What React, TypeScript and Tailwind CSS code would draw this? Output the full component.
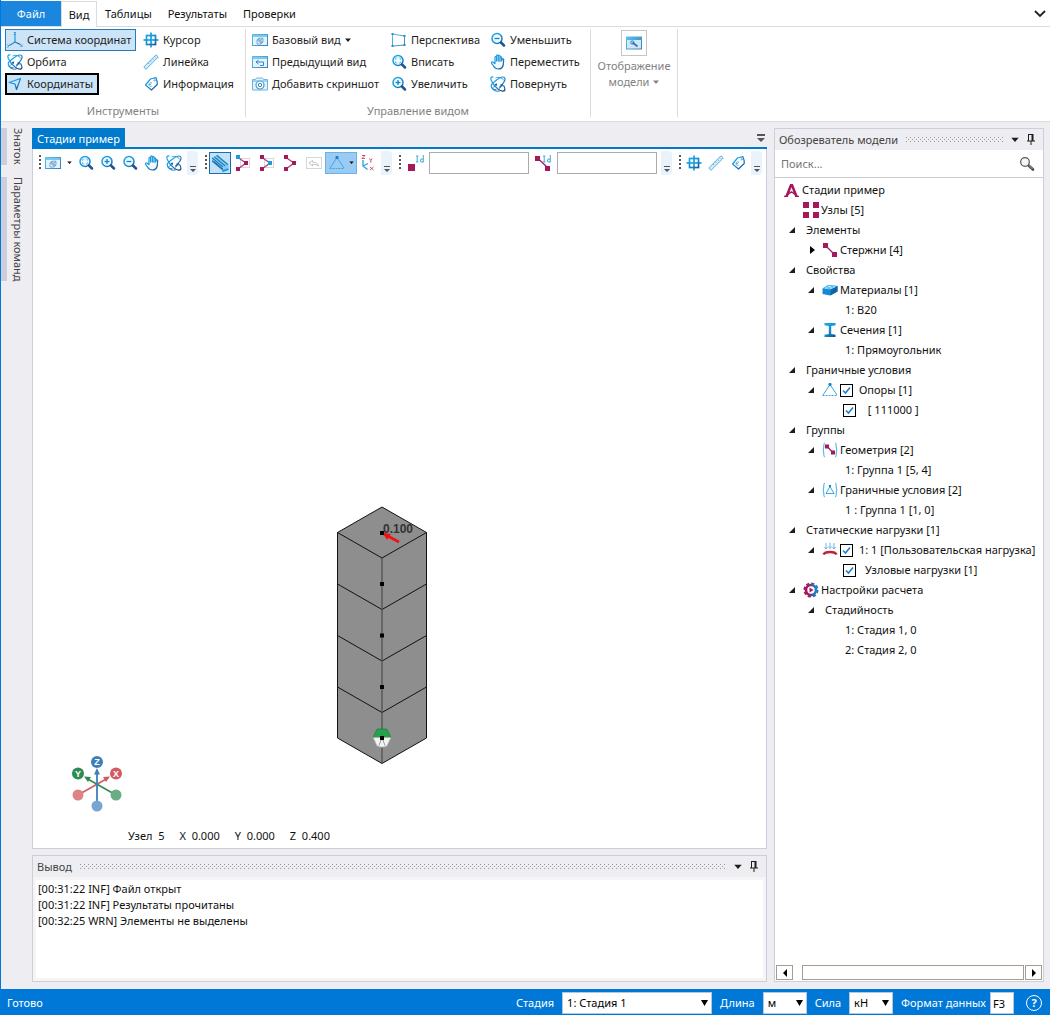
import React from 'react';
import clsx from 'clsx';

type IconProps = { className?: string };

const Svg: React.FC<{ className?: string; box?: string; children: React.ReactNode }> = ({ className, box = '0 0 16 16', children }) => (
    <svg viewBox={box} className={clsx('shrink-0', className ?? 'size-4')} fill="none" aria-hidden="true">
        {children}
    </svg>
);

// Gradients shared by all icons
const IconGradients = () => (
    <svg className="absolute size-0" aria-hidden="true">
        <defs>
            <linearGradient id="blue" x1="0" y1="0" x2="16" y2="16" gradientUnits="userSpaceOnUse">
                <stop offset="0.2" stopColor="#1ba8ea" />
                <stop offset="0.55" stopColor="#1488cf" />
                <stop offset="0.9" stopColor="#22427c" />
            </linearGradient>
            <linearGradient id="sky" x1="0" y1="0" x2="16" y2="16" gradientUnits="userSpaceOnUse">
                <stop offset="0.1" stopColor="#58c0ee" />
                <stop offset="1" stopColor="#3a78ae" />
            </linearGradient>
            <linearGradient id="gear" x1="1" y1="8" x2="15" y2="8" gradientUnits="userSpaceOnUse">
                <stop offset="0.3" stopColor="#a5185b" />
                <stop offset="0.8" stopColor="#1e7fc4" />
            </linearGradient>
        </defs>
    </svg>
);

const AxesIcon = () => (
    <Svg>
        <path d="M8 3v7L2.500 13.500M8 10l5.500 2.500" stroke="url(#blue)" strokeWidth="1.100" />
        <path d="M6.800 0.500h2.200L6.800 2.500h2.200M0.500 12.500l1 1.500 1-1.500M1.500 14l-.8 1.800M13.500 12.500l2 2.500M15.500 12.500l-2 2.500" stroke="#2a86c4" strokeWidth="0.800" />
    </Svg>
);

const OrbitIcon = ({ className }: IconProps) => (
    <Svg className={className}>
        <path d="M3.500 1C1 .5.3 2 1.300 4.500c1.200 3 4 6.500 7 8.800 3 2.200 6 2.500 6.500 .7.400-1.500-.3-3-1.300-4.800" stroke="url(#blue)" strokeWidth="1.200" />
        <path d="M6.500 13.800C3.500 14 1.200 12 1.200 9.800 1.200 7.500 3.500 6.500 6 4.500c2.500-2 4.800-3.700 7-3.500 2.200.2 2.600 2.200 1.300 4.500-1.300 2.200-3 4.300-5 6" stroke="url(#blue)" strokeWidth="1.200" />
        <path d="M5.500 2c3-1.500 6.500-.3 8.500 2.500M1.800 12c1.500 3 5.500 4 8.500 2.500" stroke="url(#blue)" strokeWidth="0.900" />
        <path d="M4.500 8l2.700-.5-.7 2.700zM13 8l-3 .8 2.300 2z" fill="#16539a" />
        <path d="M5.500 9.200l-2.500 2.500M9.500 12.500l2-2.500" stroke="#1a6fb5" strokeWidth="0.900" />
    </Svg>
);

const PlaneIcon = () => (
    <Svg>
        <path d="M2 6.500L13.500 2.500 9.500 13.500 8 8z" stroke="url(#blue)" strokeWidth="1.200" strokeLinejoin="round" />
    </Svg>
);

const CursorIcon = () => (
    <Svg>
        <path d="M8 .5v15" stroke="#1a9fe0" strokeWidth="1.700" />
        <path d="M.5 8h15" stroke="#1a9fe0" strokeWidth="1.700" />
        <rect x="3.500" y="3.500" width="9" height="9" stroke="url(#blue)" strokeWidth="1.700" />
    </Svg>
);

const RulerIcon = () => (
    <Svg>
        <path d="M13 .8L15.300 3 3 15.300.8 13z" fill="#d5edf9" stroke="#5fb0dc" />
        <path d="M5 8.800l1.200 1.200M7.200 6.600l1.200 1.200M9.400 4.400l1.200 1.200M11.500 2.300l1.200 1.200" stroke="#5fb0dc" />
    </Svg>
);

const TagIcon = () => (
    <Svg>
        <path d="M7.500 3l5.500-1.300L14.200 6v2.500L8.500 14 2.500 9z" stroke="url(#blue)" strokeWidth="1.200" strokeLinejoin="round" />
        <circle cx="11.800" cy="4.300" r=".7" stroke="#1a6fb5" strokeWidth="0.600" />
        <path d="M9 7c-1.700-.6-3 .4-3 1.600s1.200 2.200 2.600 1.700M6 8.600h2" stroke="url(#sky)" strokeWidth="0.900" />
    </Svg>
);

const WindowFrame = ({ children }: { children?: React.ReactNode }) => (
    <Svg>
        <rect x=".5" y="2.500" width="15" height="11" fill="#e3f2fb" stroke="url(#sky)" />
        <path d="M1 3h14v2H1z" fill="#7dc8ef" />
        {children}
    </Svg>
);

const BaseViewIcon = () => (
    <WindowFrame>
        <path d="M5 8h4v4H5zM5 8l2-1.800h4V10l-2 2M9 8l2-1.800M7 6.200V10h4" stroke="#4a93c8" strokeWidth="0.700" />
    </WindowFrame>
);

const PreviousViewIcon = () => (
    <WindowFrame>
        <path d="M4 8h7.500v3.500H8M6.500 6L4 8l2.500 2" stroke="#3a86bd" />
    </WindowFrame>
);

const CameraIcon = () => (
    <Svg>
        <path d="M.5 3.500h3l1-1.500h6l1 1.500h4v10.500H.5z" fill="#e3f2fb" stroke="#69b7e0" />
        <path d="M1 4h14v2H1z" fill="#9bd3f1" />
        <circle cx="8" cy="9" r="4" fill="#fff" stroke="url(#sky)" strokeWidth="1.200" />
        <circle cx="8" cy="9" r="1.700" stroke="#3a86bd" />
    </Svg>
);

const PerspectiveIcon = () => (
    <Svg>
        <path d="M1.500 2l12 2v9l-12 1z" stroke="url(#sky)" />
        <path d="M.5 1h2v2h-2zM12.500 3h2v2h-2zM12.500 12h2v2h-2zM.5 13h2v2h-2z" fill="#1c8fd0" />
    </Svg>
);

const ZoomIcon = ({ kind }: { kind: 'in' | 'out' | 'fit' }) => (
    <Svg>
        <circle cx="7" cy="6.500" r="5" stroke="url(#blue)" strokeWidth="1.500" fill="#f2faff" />
        <path d="M11 10.500l3 3" stroke="#24528f" strokeWidth="2.500" strokeLinecap="round" />
        {kind !== 'fit' && <path d="M4.500 6.500h5" stroke="#1580c5" strokeWidth="1.300" />}
        {kind === 'in' && <path d="M7 4v5" stroke="#1580c5" strokeWidth="1.300" />}
        {kind === 'fit' && <path d="M4.500 5.800V4h1.800M7.800 4h1.800v1.800M9.600 7.300V9H7.800M6.300 9H4.500V7.300" stroke="#6cc4ee" />}
    </Svg>
);

const HandIcon = () => (
    <Svg>
        <path
            d="M5 9.500V3.300c0-1.300 1.600-1.300 1.600 0V7 1.900c0-1.300 1.700-1.300 1.700 0V7 2.300c0-1.300 1.700-1.300 1.700 0v5-3.600c0-1.200 1.700-1.200 1.700 0V7l.3-1.500c.3-1.200 1.800-.8 1.700.3L13.200 11c-.6 2.600-2.200 4-4.700 4-2.600 0-4-1.200-5-3L1.600 9.300c-.6-1.200.7-2 1.600-1.100z"
            fill="#eef8fe"
            stroke="url(#blue)"
            strokeWidth="1.200"
            strokeLinejoin="round"
        />
    </Svg>
);

const DisplayIcon = () => (
    <Svg>
        <path d="M0 1.500h16v13H0z" fill="url(#sky)" />
        <path d="M1 5h14v8.500H1z" fill="#cfe8f7" />
        <path d="M6.500 7.500l5 4" stroke="#2a7bbd" strokeWidth="1.800" />
        <circle cx="6.300" cy="7.500" r="1.600" stroke="#2a7bbd" />
    </Svg>
);

const BeamIcon = () => (
    <Svg className="size-[18px]">
        <path d="M1 3.500L6 .5l9.500 8.500v4.500L10.500 15 1 7z" fill="#7ccbf0" />
        <path d="M1 3.500l9.500 8M3 2.500l9.500 8M5 1.200l10 8.300M1 6l9.500 8M2.500 6.500l8 7" stroke="#1c6fae" strokeWidth="0.900" />
        <path d="M10 15.500l5.500-2" stroke="#1b9be0" strokeWidth="1.600" />
    </Svg>
);

// Angle of two bars with three nodes, each tool highlights other parts
const AngleIcon = ({ ends, middle, box = true }: { ends: string; middle: string; box?: boolean }) => (
    <Svg>
        {box && <rect x="5.500" y="3.500" width="9" height="9" stroke="#c9a7b8" strokeDasharray="1 1" />}
        <path d="M3 2.500L11 8 3 14" stroke="#a8406f" strokeWidth="1.300" />
        <path d="M1 0h4v4H1z" fill={ends} />
        <path d="M9 6h4v4H9z" fill={middle} />
        <path d="M1 12h4v4H1z" fill="#a5185b" />
    </Svg>
);

const UndoFrameIcon = () => (
    <Svg>
        <rect x=".5" y="2.500" width="15" height="11" stroke="#d6d6d6" />
        <path d="M3 8l3.500-2.500v1.500c3 0 5 1 6 4-2-1.500-3.500-1.700-6-1.700V11z" stroke="#c4c4c4" />
    </Svg>
);

const SupportIcon = ({ className }: IconProps) => (
    <Svg className={className}>
        <path d="M8 2.500L1 13M8 2.500L15 13" stroke="#38a9e2" />
        <path d="M.5 13.500h15" stroke="#38a9e2" strokeDasharray="2 1" />
        <rect x="6.500" y="1" width="3" height="3" rx="1" fill="#1580c5" />
    </Svg>
);

const LocalAxesIcon = () => (
    <Svg>
        <path d="M3 5v6l4.500 3.500M3 11l5-2.500" stroke="#2b9fdd" strokeWidth="1.300" />
        <path d="M2 .5h3l-3 3h3M9.500 3.500l1.300 2 1.300-2M10.800 5.500v2.200M10 12l3.500 3M13.500 12L10 15" stroke="#c43f76" strokeWidth="0.900" />
    </Svg>
);

const IdIcon = ({ bar }: { bar?: boolean }) => (
    <Svg>
        {bar ? (
            <>
                <path d="M3 3.500l10 9.500" stroke="#a5185b" strokeWidth="1.200" />
                <path d="M0 1h5v5H0zM10 11h5v5h-5z" fill="#a5185b" />
            </>
        ) : (
            <path d="M0 9h7v7H0z" fill="#a5185b" />
        )}
        <path d="M8 1h2.500M9.200 1v6M8 7h2.500M15.300 0v7.500M15.300 4.500c-1-1-2.800-.5-2.800 1s1.800 2 2.800.8" stroke="#4bb0e0" strokeWidth="1.100" />
    </Svg>
);

const LogoIcon = () => (
    <Svg className="mr-px size-[15px]">
        <path d="M1 15L6.500 1h3L15 15h-3L8 4.500 4 15z" fill="#a5185b" />
        <path d="M3.500 12.500l4.500-3 4.500 3" stroke="#a5185b" strokeWidth="1.600" />
        <path d="M0 13.500h4V15H0zM12 13.500h4V15h-4z" fill="#a5185b" />
    </Svg>
);

const NodesIcon = () => (
    <Svg>
        <path d="M0 0h6v6H0zM10 0h6v6h-6zM0 10h6v6H0zM10 10h6v6h-6z" fill="#a5185b" />
    </Svg>
);

const BarIcon = () => (
    <Svg>
        <path d="M3 3l10 10" stroke="#a5185b" strokeWidth="1.200" />
        <path d="M1 1h5v5H1zM10 10h5v5h-5z" fill="#a5185b" />
    </Svg>
);

const MaterialIcon = () => (
    <Svg>
        <path d="M.5 6.500L6 3l9.500 1v5.500L8 13.500.5 12z" fill="#1789d2" />
        <path d="M.5 6.500L6 3l9.500 1L9 7.500z" fill="#5cc0f0" />
        <path d="M9 7.500l6.500-3.500v5.500L8.500 13.500z" fill="#1260a5" />
        <path d="M3 6h3M6 4.500h3M8 6h2.500M11 5h2" stroke="#bfe6fa" />
    </Svg>
);

const SectionIcon = () => (
    <Svg>
        <path d="M2.500 1h11v2.200L9.200 4v8l4.300.8V15h-11v-2.200l4.300-.8V4l-4.300-.8z" fill="url(#blue)" />
    </Svg>
);

const Braces = ({ children }: { children: React.ReactNode }) => (
    <Svg>
        <path d="M3 1C1 1 2.500 6 1 8c1.500 2 0 7 2 7M13 1c2 0 .5 5 2 7-1.500 2 0 7-2 7" stroke="#35a8e0" />
        {children}
    </Svg>
);

const GeometryGroupIcon = () => (
    <Braces>
        <path d="M5 4l6 7" stroke="#a5185b" strokeWidth="1.200" />
        <path d="M3 2.500h4v4H3zM9 8.500h4v4H9z" fill="#a5185b" />
    </Braces>
);

const BoundaryGroupIcon = () => (
    <Braces>
        <path d="M8 4.500L4 11.500h8z" stroke="#38a9e2" />
        <path d="M7 3h2v2H7z" fill="#1580c5" />
    </Braces>
);

const LoadIcon = () => (
    <Svg>
        <path d="M4 1v6M8 .5v6M12 1v6M2.500 5L4 7l1.500-2M6.500 4.500l1.500 2 1.500-2M10.500 5L12 7l1.500-2" stroke="#6db9e2" />
        <path d="M1.500 12.500C3 9 13 9 14.500 12.500" stroke="#c0203a" strokeWidth="2.500" />
    </Svg>
);

const GearIcon = () => (
    <Svg>
        <circle cx="8" cy="8" r="6.700" stroke="url(#gear)" strokeWidth="1.800" strokeDasharray="3.260 2" />
        <circle cx="8" cy="8" r="5" stroke="url(#gear)" strokeWidth="2.600" />
        <path d="M6.500 5.500l4 2.500-4 2.500z" fill="#a5185b" />
    </Svg>
);

const Caret = ({ className }: IconProps) => (
    <Svg box="0 0 6 4" className={className ?? 'h-1 w-1.5'}>
        <path d="M0 .5h6L3 4z" fill="currentColor" />
    </Svg>
);

const PinIcon = () => (
    <Svg box="0 0 8 11" className="h-[11px] w-2">
        <path d="M2 .5h4M1.500 0v7M5.500 0v7M0 7h8M4 7v4" stroke="#1e1e1e" />
        <path d="M4.500 0h2v7h-2z" fill="#1e1e1e" />
    </Svg>
);

const RibbonButton: React.FC<{ icon: React.ReactNode; label: string; active?: boolean; focused?: boolean; dropdown?: boolean }> = ({
    icon,
    label,
    active,
    focused,
    dropdown,
}) => (
    <button
        className={clsx(
            'flex h-[22px] items-center gap-1 whitespace-nowrap',
            focused ? 'border-2 border-black pr-1' : 'border px-px pr-1',
            active && !focused && 'border-[#2a7ab8]',
            !active && 'border-transparent',
            active && 'bg-[#cce4f7]',
        )}
    >
        {icon}
        {label}
        {dropdown && <Caret />}
    </button>
);

const RibbonGroup: React.FC<{ title: string; children: React.ReactNode }> = ({ title, children }) => (
    <section className="flex flex-col border-r border-[#dcdcdc] px-1">
        <div className="flex">{children}</div>
        <h2 className="mt-2 text-center text-[#828282]">{title}</h2>
    </section>
);

const Ribbon = () => (
    <header className="border-b border-[#dcdcdc] bg-white">
        <nav className="flex h-[27px] items-stretch border-b border-[#dcdcdc] pt-px">
            <button className="w-[60px] bg-[#1a86dd] text-white">Файл</button>
            <button className="-mb-px w-9 border border-b-0 border-[#dcdcdc] bg-white">Вид</button>
            <button className="px-2">Таблицы</button>
            <button className="px-2">Результаты</button>
            <button className="px-2">Проверки</button>
            <button className="ml-auto px-1" aria-label="Свернуть ленту">
                <Svg box="0 0 12 8" className="h-2 w-3">
                    <path d="M1 1l5 5 5-5" stroke="#222" strokeWidth="1.800" />
                </Svg>
            </button>
        </nav>
        <div className="flex h-[94px] pt-0.5 pb-1 text-[#1e1e1e]">
            <RibbonGroup title="Инструменты">
                <div className="flex w-[136px] flex-col items-start">
                    <RibbonButton icon={<AxesIcon />} label="Система координат" active />
                    <RibbonButton icon={<OrbitIcon />} label="Орбита" />
                    <RibbonButton icon={<PlaneIcon />} label="Координаты" active focused />
                </div>
                <div className="flex w-[100px] flex-col items-start">
                    <RibbonButton icon={<CursorIcon />} label="Курсор" />
                    <RibbonButton icon={<RulerIcon />} label="Линейка" />
                    <RibbonButton icon={<TagIcon />} label="Информация" />
                </div>
            </RibbonGroup>
            <RibbonGroup title="Управление видом">
                <div className="flex w-[139px] flex-col items-start">
                    <RibbonButton icon={<BaseViewIcon />} label="Базовый вид" dropdown />
                    <RibbonButton icon={<PreviousViewIcon />} label="Предыдущий вид" />
                    <RibbonButton icon={<CameraIcon />} label="Добавить скриншот" />
                </div>
                <div className="flex w-[99px] flex-col items-start">
                    <RibbonButton icon={<PerspectiveIcon />} label="Перспектива" />
                    <RibbonButton icon={<ZoomIcon kind="fit" />} label="Вписать" />
                    <RibbonButton icon={<ZoomIcon kind="in" />} label="Увеличить" />
                </div>
                <div className="flex w-[98px] flex-col items-start">
                    <RibbonButton icon={<ZoomIcon kind="out" />} label="Уменьшить" />
                    <RibbonButton icon={<HandIcon />} label="Переместить" />
                    <RibbonButton icon={<OrbitIcon />} label="Повернуть" />
                </div>
            </RibbonGroup>
            <section className="flex w-[87px] flex-col items-center border-r border-[#dcdcdc] pt-px text-[#828282]">
                <button className="flex flex-col items-center">
                    <span className="mb-0.5 flex size-[26px] items-center justify-center border border-[#c6c6c6]">
                        <DisplayIcon />
                    </span>
                    <span>Отображение</span>
                    <span className="flex items-center gap-1">
                        модели <Caret />
                    </span>
                </button>
            </section>
        </div>
    </header>
);

const ToolGrip = () => (
    <Svg box="0 0 5 15" className="h-[15px] w-[5px]">
        <path d="M2 0v15" stroke="#555" strokeWidth="2" strokeDasharray="2 2" />
    </Svg>
);

const ToolOverflow = () => (
    <button className="ml-0.5 flex h-6 w-[11px] items-end justify-center rounded-r bg-[#eaf3fc] pb-[3px] text-[#555]" aria-label="Ещё">
        <Svg box="0 0 6 6" className="size-1.5">
            <path d="M0 0h6v1H0zM0 3h6L3 6z" fill="currentColor" />
        </Svg>
    </button>
);

const ToolButton: React.FC<{ label: string; className?: string; children: React.ReactNode }> = ({ label, className, children }) => (
    <button className={clsx('flex h-[22px] items-center justify-center', className ?? 'w-[22px]')} aria-label={label}>
        {children}
    </button>
);

const Toolbar = () => (
    <div className="flex h-[25px] items-center gap-1.5 pl-[5px]">
        <div className="flex items-center">
            <ToolGrip />
            <ToolButton label="Базовый вид" className="w-5"><BaseViewIcon /></ToolButton>
            <ToolButton label="Выбор вида" className="w-3"><Caret className="h-[3px] w-[5px]" /></ToolButton>
            <ToolButton label="Вписать"><ZoomIcon kind="fit" /></ToolButton>
            <ToolButton label="Увеличить"><ZoomIcon kind="in" /></ToolButton>
            <ToolButton label="Уменьшить"><ZoomIcon kind="out" /></ToolButton>
            <ToolButton label="Переместить"><HandIcon /></ToolButton>
            <ToolButton label="Повернуть"><OrbitIcon /></ToolButton>
            <ToolOverflow />
        </div>
        <div className="flex items-center">
            <ToolGrip />
            <ToolButton label="Сечения" className="w-[22px] border border-[#1c6ea4] bg-[#c4e1f7]"><BeamIcon /></ToolButton>
            <ToolButton label="Выбор узлов" className="w-6"><AngleIcon ends="#1c9be0" middle="#a5185b" /></ToolButton>
            <ToolButton label="Выбор стержней" className="w-6"><AngleIcon ends="#a5185b" middle="#1c9be0" /></ToolButton>
            <ToolButton label="Выбор всех" className="w-6"><AngleIcon ends="#a5185b" middle="#a5185b" box={false} /></ToolButton>
            <ToolButton label="Отменить"><UndoFrameIcon /></ToolButton>
            <ToolButton label="Опоры" className="w-8 gap-1 border border-[#6fb0e6] bg-[#9acbf2]">
                <SupportIcon />
                <Caret className="h-[3px] w-[5px]" />
            </ToolButton>
            <ToolButton label="Локальные оси"><LocalAxesIcon /></ToolButton>
            <ToolOverflow />
        </div>
        <div className="flex items-center">
            <ToolGrip />
            <label htmlFor="node-id" className="flex w-[26px] justify-center" aria-label="Номер узла"><IdIcon /></label>
            <input id="node-id" className="h-[22px] w-[100px] border border-[#ababab] bg-white px-1" />
            <label htmlFor="bar-id" className="flex w-7 justify-center" aria-label="Номер стержня"><IdIcon bar /></label>
            <input id="bar-id" className="mr-0.5 h-[22px] w-[100px] border border-[#ababab] bg-white px-1" />
            <ToolOverflow />
        </div>
        <div className="flex items-center">
            <ToolGrip />
            <ToolButton label="Курсор"><CursorIcon /></ToolButton>
            <ToolButton label="Линейка"><RulerIcon /></ToolButton>
            <ToolButton label="Информация"><TagIcon /></ToolButton>
            <ToolOverflow />
        </div>
    </div>
);

// Column of four stacked bars, fixed at the bottom and loaded at the top
const ColumnModel = () => (
    <svg viewBox="0 0 92 260" className="absolute top-[331px] left-[303px] h-[260px] w-[92px]" fill="none">
        <path d="M46 1l44.500 25.500v205.500L46 257.500 1.500 232V26.500z" fill="#8e8e8e" stroke="#111" />
        <path d="M1.500 26.500L46 52l44.500-25.500M1.500 78L46 103.500 90.500 78M1.500 129.500L46 155l44.500-25.500M1.500 181L46 206.500 90.500 181" stroke="#111" />
        <path d="M46 52v205" stroke="#4c4c4c" strokeWidth="1.200" />
        <path d="M41 223h10l4 8.500H37z" fill="#25a24c" stroke="#187a36" strokeWidth="0.600" />
        <path d="M37 231.500h18l-4 8.500c-3 1.500-7 1.500-10 0z" fill="#f4f4f4" stroke="#a9a9a9" strokeWidth="0.800" />
        <path d="M46 231.500l-3 8M46 231.500l3 8" stroke="#999" />
        <path d="M48 28l15 8" stroke="#f01010" strokeWidth="2.600" />
        <path d="M47 27l8 1-4 6z" fill="#f01010" />
        <path d="M44 25h4v4h-4zM44 76h4v4h-4zM44 127.500h4v4h-4zM44 179h4v4h-4zM44 230h4v4h-4z" fill="#000" />
        <text x="47" y="27" fontFamily="Liberation Sans, sans-serif" fontSize="12" fontWeight="bold" fill="#333">0.100</text>
    </svg>
);

const AxisGizmo = () => (
    <svg viewBox="0 0 54 58" className="absolute bottom-[35px] left-[37px] h-[58px] w-[54px]" fill="none">
        <path d="M8 40l30-17" stroke="#d25b63" strokeWidth="1.600" />
        <path d="M46 40L16 23" stroke="#2c8c52" strokeWidth="1.600" />
        <path d="M27 50V18" stroke="#3f7fb8" strokeWidth="1.800" />
        <path d="M27 13l3 6.500h-6z" fill="#3f7fb8" />
        <path d="M14 21.500l7 .5-3 5z" fill="#2c8c52" />
        <path d="M40 21.500l-7 .5 3 5z" fill="#d25b63" />
        <circle cx="8" cy="40" r="5.500" fill="#de8286" />
        <circle cx="46" cy="40" r="5.500" fill="#68ad86" />
        <circle cx="27" cy="51" r="5.500" fill="#76a5cf" />
        <circle cx="27" cy="7" r="6" fill="#3f7fb8" />
        <circle cx="8" cy="18.500" r="6" fill="#2c8c52" />
        <circle cx="46" cy="18.500" r="6" fill="#d25b63" />
        <g fill="#fff" fontFamily="Liberation Sans, sans-serif" fontSize="9" fontWeight="bold" textAnchor="middle">
            <text x="27" y="10">Z</text>
            <text x="8" y="21.500">Y</text>
            <text x="46" y="21.500">X</text>
        </g>
    </svg>
);

const Viewport = () => (
    <section className="flex min-h-0 flex-1 flex-col">
        <div className="flex h-[21px] items-center border-b-2 border-[#007acc]">
            <h1 className="flex h-full items-center bg-[#007acc] px-[5px] pt-0.5 text-white">Стадии пример</h1>
            <button className="ml-auto pr-0.5 text-[#555]" aria-label="Список документов">
                <Svg box="0 0 8 8" className="size-2">
                    <path d="M0 0h8v2H0zM0 4h8L4 8z" fill="currentColor" />
                </Svg>
            </button>
        </div>
        <div className="flex flex-1 flex-col border border-t-0 border-[#ccceDB] bg-white pt-px">
            <Toolbar />
            <div className="relative flex-1 overflow-hidden">
                <ColumnModel />
                <AxisGizmo />
                <div className="absolute bottom-1 left-[95px] flex gap-[15px]">
                    <span>Узел&nbsp; 5</span>
                    <span>X&nbsp; 0.000</span>
                    <span>Y&nbsp; 0.000</span>
                    <span>Z&nbsp; 0.400</span>
                </div>
            </div>
        </div>
    </section>
);

const PanelHeader: React.FC<{ title: string }> = ({ title }) => (
    <div className="flex h-[21px] shrink-0 items-center gap-2 bg-[#eeeef2] pr-2 pl-1 text-[#444]">
        <h2>{title}</h2>
        <svg className="h-[5px] min-w-0 flex-1" shapeRendering="crispEdges" aria-hidden="true">
            <defs>
                <pattern id="dots" width="4" height="4" patternUnits="userSpaceOnUse">
                    <path d="M0 0h1v1H0zM2 2h1v1H2z" fill="#999" />
                </pattern>
            </defs>
            <rect width="100%" height="5" fill="url(#dots)" />
        </svg>
        <button className="text-[#1e1e1e]" aria-label="Меню панели"><Caret className="h-[5px] w-2" /></button>
        <button aria-label="Закрепить"><PinIcon /></button>
    </div>
);

const LOG = ['[00:31:22 INF] Файл открыт', '[00:31:22 INF] Результаты прочитаны', '[00:32:25 WRN] Элементы не выделены'];

const OutputPanel = () => (
    <section className="flex h-[127px] flex-col border border-[#ccceDB] bg-[#f5f5f5]">
        <PanelHeader title="Вывод" />
        <div className="m-[3px] flex-1 bg-white px-0.5 py-px">
            {LOG.map((line) => (
                <p key={line}>{line}</p>
            ))}
        </div>
    </section>
);

interface TreeRow {
    label: string;
    level: number;
    state?: 'open' | 'closed';
    icon?: React.ReactNode;
    checked?: boolean;
}

const TREE: TreeRow[] = [
    { label: 'Стадии пример', level: 0, icon: <LogoIcon /> },
    { label: 'Узлы [5]', level: 1, icon: <NodesIcon /> },
    { label: 'Элементы', level: 1, state: 'open' },
    { label: 'Стержни [4]', level: 2, state: 'closed', icon: <BarIcon /> },
    { label: 'Свойства', level: 1, state: 'open' },
    { label: 'Материалы [1]', level: 2, state: 'open', icon: <MaterialIcon /> },
    { label: '1: B20', level: 3 },
    { label: 'Сечения [1]', level: 2, state: 'open', icon: <SectionIcon /> },
    { label: '1: Прямоугольник', level: 3 },
    { label: 'Граничные условия', level: 1, state: 'open' },
    { label: 'Опоры [1]', level: 2, state: 'open', icon: <SupportIcon />, checked: true },
    { label: '\u00a0[ 111000 ]', level: 3, checked: true },
    { label: 'Группы', level: 1, state: 'open' },
    { label: 'Геометрия [2]', level: 2, state: 'open', icon: <GeometryGroupIcon /> },
    { label: '1: Группа 1 [5, 4]', level: 3 },
    { label: 'Граничные условия [2]', level: 2, state: 'open', icon: <BoundaryGroupIcon /> },
    { label: '1 : Группа 1 [1, 0]', level: 3 },
    { label: 'Статические нагрузки [1]', level: 1, state: 'open' },
    { label: '1: 1 [Пользовательская нагрузка]', level: 2, state: 'open', icon: <LoadIcon />, checked: true },
    { label: 'Узловые нагрузки [1]', level: 3, checked: true },
    { label: 'Настройки расчета', level: 1, state: 'open', icon: <GearIcon /> },
    { label: 'Стадийность', level: 2, state: 'open' },
    { label: '1: Стадия 1, 0', level: 3 },
    { label: '2: Стадия 2, 0', level: 3 },
];

// Left padding up to the icon, per level
const INDENT = ['pl-[9px]', 'pl-3', 'pl-[31px]', 'pl-[50px]'];

const TreeItem: React.FC<{ row: TreeRow }> = ({ row }) => (
    <li className={clsx('flex h-5 items-center whitespace-nowrap', INDENT[row.level])}>
        {(row.level === 1 || row.level === 2) && (
            <span className="flex w-4 shrink-0 items-center pl-0.5">
                {row.state === 'open' && (
                    <Svg box="0 0 6 6" className="size-1.5">
                        <path d="M6 0v6H0z" fill="#1e1e1e" />
                    </Svg>
                )}
                {row.state === 'closed' && (
                    <Svg box="0 0 5 8" className="ml-0.5 h-2 w-[5px]">
                        <path d="M0 0l5 4-5 4z" fill="#000" />
                    </Svg>
                )}
            </span>
        )}
        <label className="flex items-center gap-0.5">
            {row.icon}
            {row.checked !== undefined && (
                <span className={clsx('relative flex size-[13px]', row.level === 3 && 'ml-[18px]', 'mr-1')}>
                    <input type="checkbox" defaultChecked={row.checked} className="peer size-[13px] appearance-none border border-black bg-white" />
                    <Svg box="0 0 13 13" className="pointer-events-none absolute inset-0 hidden size-[13px] peer-checked:block">
                        <path d="M3 6.500L5.500 9 10 3.500" stroke="#1a80d4" strokeWidth="1.600" />
                    </Svg>
                </span>
            )}
            <span className={row.icon ? undefined : row.level === 3 && row.checked === undefined ? 'pl-5' : 'pl-[3px]'}>{row.label}</span>
        </label>
    </li>
);

const ScrollArrow: React.FC<{ label: string; d: string }> = ({ label, d }) => (
    <button className="flex h-[15px] w-[17px] items-center justify-center border border-[#a59d8f] bg-white" aria-label={label}>
        <Svg box="0 0 4 8" className="h-2 w-1">
            <path d={d} fill="#000" />
        </Svg>
    </button>
);

const ModelBrowser = () => (
    <aside className="flex w-[270px] shrink-0 flex-col border border-[#ccceDB] bg-white">
        <PanelHeader title="Обозреватель модели" />
        <div className="flex h-7 items-center border-b border-[#ccc] pr-2 pl-1.5">
            <input aria-label="Поиск" placeholder="Поиск..." className="min-w-0 flex-1 outline-none placeholder:text-[#757575]" />
            <button aria-label="Найти">
                <Svg>
                    <path d="M8.500 8.500l5.500 5" stroke="#444" strokeWidth="2.600" strokeLinecap="round" />
                    <path d="M9 8.500l4.500 4.500" stroke="#c3a370" />
                    <circle cx="6" cy="6" r="4.300" fill="#f4f8fa" stroke="#555" strokeWidth="1.200" />
                </Svg>
            </button>
        </div>
        <ul className="flex-1 overflow-hidden pt-0.5">
            {TREE.map((row, i) => (
                <TreeItem key={i} row={row} />
            ))}
        </ul>
        <div className="flex gap-px p-px">
            <ScrollArrow label="Влево" d="M4 0v8L0 4z" />
            <div className="ml-2 h-[15px] flex-1 border border-[#a59d8f]" />
            <ScrollArrow label="Вправо" d="M0 0v8l4-4z" />
        </div>
    </aside>
);

const SideTab: React.FC<{ label: string }> = ({ label }) => (
    <button className="border-l-[6px] border-[#ccceDB] py-px pl-[3px] text-[#444] [writing-mode:vertical-rl]">{label}</button>
);

const StatusSelect: React.FC<{ id: string; label: string; value: string; className: string }> = ({ id, label, value, className }) => (
    <div className="flex items-center gap-2">
        <label htmlFor={id}>{label}</label>
        <span className="relative flex items-center text-black">
            <select id={id} className={clsx('h-[22px] appearance-none border border-[#b4c8dc] bg-white pl-1', className)}>
                <option>{value}</option>
            </select>
            <Svg box="0 0 7 6" className="pointer-events-none absolute right-1 h-1.5 w-[7px]">
                <path d="M0 0h7L3.500 6z" fill="#000" />
            </Svg>
        </span>
    </div>
);

const StatusBar = () => (
    <footer className="flex h-[26px] shrink-0 items-center justify-end gap-2 bg-[#0078d7] pt-0.5 pr-2 pl-1.5 text-white">
        <span className="mr-auto">Готово</span>
        <StatusSelect id="stage" label="Стадия" value="1: Стадия 1" className="w-[150px]" />
        <StatusSelect id="length" label="Длина" value="м" className="w-11" />
        <StatusSelect id="force" label="Сила" value="кН" className="w-11" />
        <div className="flex items-center gap-1">
            <label htmlFor="format">Формат данных</label>
            <input id="format" defaultValue="F3" className="h-[22px] w-6 border border-[#b4c8dc] bg-white pl-0.5 text-black" />
        </div>
        <button aria-label="Справка" className="ml-1 flex size-4 items-center justify-center rounded-full border border-white font-bold">
            ?
        </button>
    </footer>
);

export default function App() {
    return (
        <div className="flex h-screen flex-col border-l border-[#0078d7] bg-[#eeeef2] font-['Noto_Sans','Open_Sans',sans-serif] text-[11px]/4 text-[#111]">
            <IconGradients />
            <Ribbon />
            <div className="flex min-h-0 flex-1 gap-[7px] pt-1.5 pr-1.5 pb-[7px]">
                <div className="flex w-6 shrink-0 flex-col items-start gap-3">
                    <SideTab label="Знаток" />
                    <SideTab label="Параметры команд" />
                </div>
                <main className="flex min-w-0 flex-1 flex-col gap-1.5">
                    <Viewport />
                    <OutputPanel />
                </main>
                <ModelBrowser />
            </div>
            <StatusBar />
        </div>
    );
}
